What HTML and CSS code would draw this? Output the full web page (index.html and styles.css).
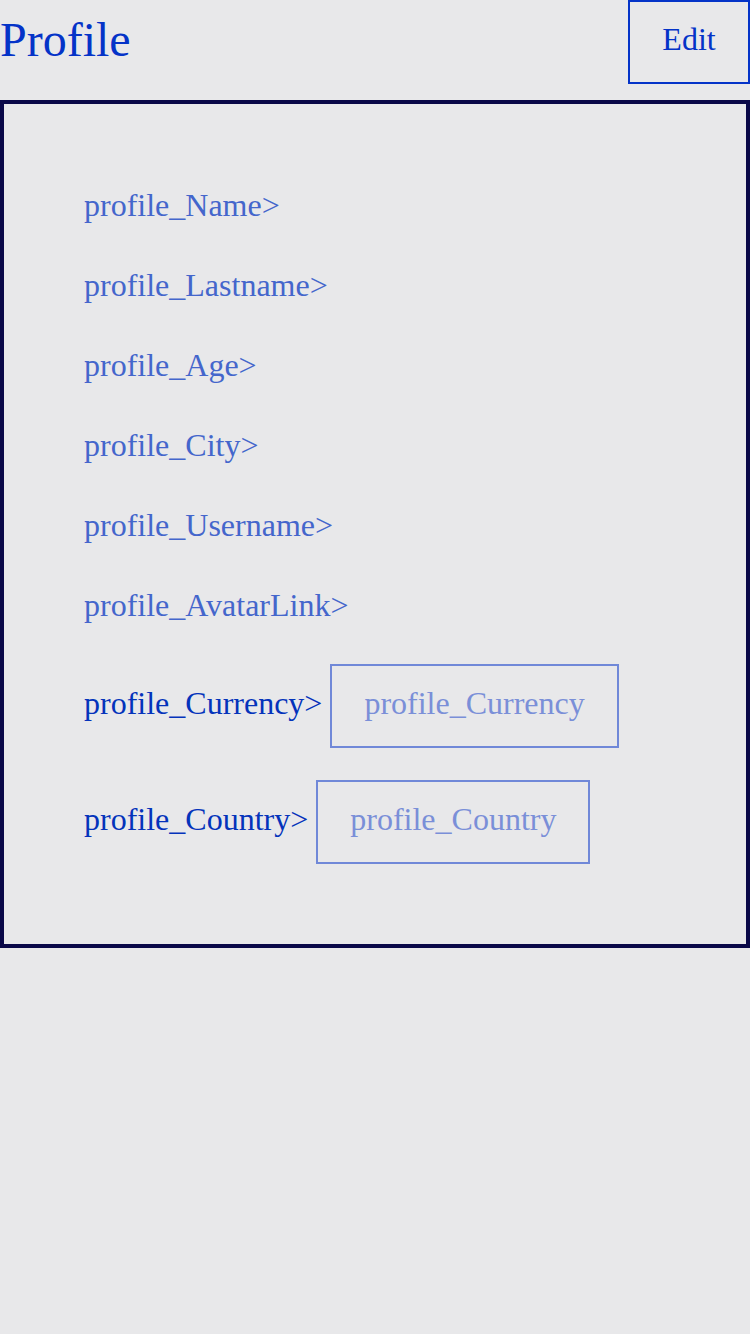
FILE: index.html
```html
<!DOCTYPE html>
<html>
<head>
<meta charset="utf-8">
<link rel="stylesheet" href="styles.css">
</head>
<body>
<header class="topbar">
  <h1 class="title">Profile</h1>
  <button class="edit-btn">Edit</button>
</header>
<section class="card">
  <div class="row">profile_Name&gt;</div>
  <div class="row">profile_Lastname&gt;</div>
  <div class="row">profile_Age&gt;</div>
  <div class="row">profile_City&gt;</div>
  <div class="row">profile_Username&gt;</div>
  <div class="row">profile_AvatarLink&gt;</div>
  <div class="field first">
    <span class="field-label">profile_Currency&gt;</span>
    <span class="field-box">profile_Currency</span>
  </div>
  <div class="field">
    <span class="field-label">profile_Country&gt;</span>
    <span class="field-box">profile_Country</span>
  </div>
</section>
</body>
</html>
```

FILE: styles.css
```css
html, body {
  margin: 0;
  padding: 0;
  background: #e8e8ea;
  font-family: "Liberation Serif", "Times New Roman", serif;
}
.topbar {
  display: flex;
  justify-content: space-between;
  align-items: flex-start;
  height: 100px;
}
.title {
  margin: 0;
  font-weight: normal;
  font-size: 48px;
  line-height: 80px;
  color: #0433c8;
}
.edit-btn {
  box-sizing: border-box;
  width: 122px;
  height: 84px;
  border: 2px solid #0433c8;
  background: transparent;
  font-family: "Liberation Serif", "Times New Roman", serif;
  font-size: 32px;
  color: #0433c8;
  padding: 0 0 6px 0;
}
.card {
  box-sizing: border-box;
  width: 750px;
  border: 4px solid #0a0848;
  padding: 61px 0 80px 80px;
}
.row {
  font-size: 32px;
  line-height: 80px;
  height: 80px;
  color: #4466cc;
}
.field {
  display: flex;
  align-items: baseline;
  gap: 8px;
  margin-top: 32px;
  font-size: 32px;
}
.field.first {
  margin-top: 19px;
}
.field-label {
  color: #0433bb;
}
.field-box {
  box-sizing: border-box;
  height: 84px;
  line-height: 74px;
  padding: 0 32px 6px 32px;
  border: 2px solid #7088d8;
  color: #7a8fd8;
}
```
